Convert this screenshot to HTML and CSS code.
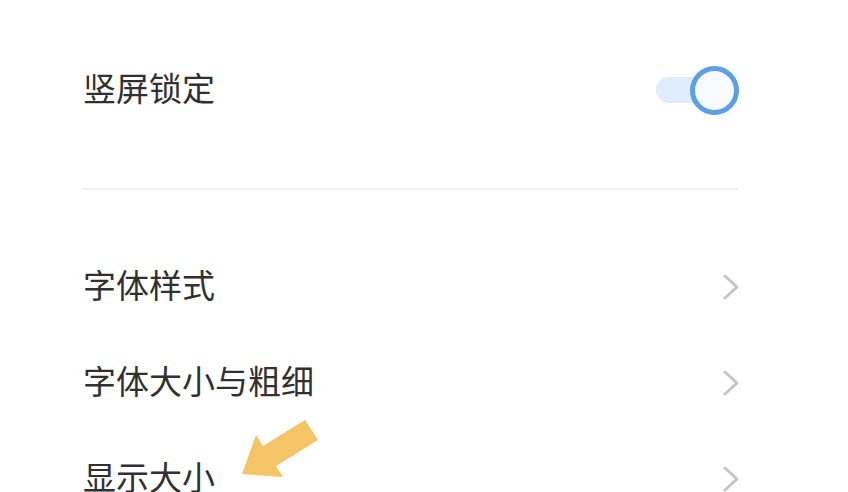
FILE: index.html
```html
<!DOCTYPE html>
<html lang="zh-CN">
<head>
    <meta charset="UTF-8">
    <meta name="viewport" content="width=device-width, initial-scale=1.0">
    <title>显示设置</title>
    <link rel="stylesheet" href="styles.css">
</head>
<body>
    <div class="settings">
        <div class="row">
            <span class="label">竖屏锁定</span>
            <div class="toggle on">
                <div class="track"></div>
                <div class="knob"></div>
            </div>
        </div>

        <div class="divider"></div>

        <div class="group">
            <div class="row">
                <span class="label">字体样式</span>
                <svg class="chevron" width="16" height="26" viewBox="0 0 16 26">
                    <polyline points="2,2 14,13 2,24" />
                </svg>
            </div>
            <div class="row">
                <span class="label">字体大小与粗细</span>
                <svg class="chevron" width="16" height="26" viewBox="0 0 16 26">
                    <polyline points="2,2 14,13 2,24" />
                </svg>
            </div>
            <div class="row">
                <span class="label">显示大小</span>
                <svg class="chevron" width="16" height="26" viewBox="0 0 16 26">
                    <polyline points="2,2 14,13 2,24" />
                </svg>
            </div>
        </div>
    </div>

    <!-- hint arrow drawn over the list -->
    <svg class="hint-arrow" width="848" height="492" viewBox="0 0 848 492">
        <polygon points="305,420 318,440 276,466 283,477 242,474 256,435 263,446" />
    </svg>
</body>
</html>
```

FILE: styles.css
```css
html, body {
    margin: 0;
    padding: 0;
    background: #ffffff;
    overflow: hidden;
}

body {
    width: 848px;
    height: 492px;
    position: relative;
    font-family: "Noto Sans CJK SC", "Noto Sans", sans-serif;
}

.settings {
    padding: 42px 110px 0 82px;
}

.row {
    height: 96px;
    display: flex;
    align-items: center;
    justify-content: space-between;
}

.label {
    font-size: 33px;
    color: #303030;
    padding-left: 1px;
    padding-bottom: 6px;
}

.divider {
    height: 2px;
    background: #f1f1f1;
    margin-top: 50px;
    margin-bottom: 49px;
}

.toggle {
    position: relative;
    width: 82px;
    height: 49px;
    display: flex;
    align-items: center;
}

.toggle .track {
    width: 70px;
    height: 26px;
    border-radius: 13px;
    background: #dfecfb;
}

.toggle .knob {
    position: absolute;
    right: -1px;
    top: 0;
    width: 39px;
    height: 39px;
    border-radius: 50%;
    border: 5px solid #5c9ee9;
    background: #f7fbff;
}

.chevron {
    margin-right: -1px;
}

.chevron polyline {
    fill: none;
    stroke: #c6c6c6;
    stroke-width: 3;
    stroke-linecap: round;
    stroke-linejoin: round;
}

.hint-arrow {
    position: absolute;
    left: 0;
    top: 0;
    pointer-events: none;
}

.hint-arrow polygon {
    fill: #f4c467;
}
```
